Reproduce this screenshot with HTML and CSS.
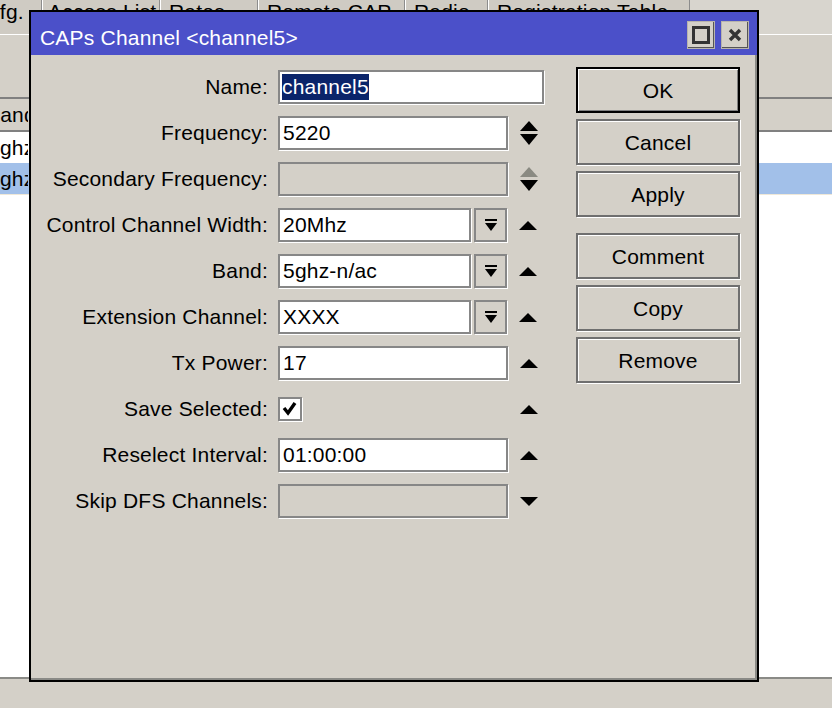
FILE: index.html
```html
<!DOCTYPE html>
<html>
<head>
    <title>CAPs Channel</title>
    <link rel="stylesheet" href="styles.css">
</head>
<body>
    <!-- Background CAPsMAN window -->
    <div class="desktop">
        <div class="tabs">
            <span class="tab tab-first">Security Cfg.</span>
            <span class="tab tab-access">Access List</span>
            <span class="tab tab-rates">Rates</span>
            <span class="tab tab-remote">Remote CAP</span>
            <span class="tab tab-radio">Radio</span>
            <span class="tab tab-reg">Registration Table</span>
        </div>
        <div class="toolbar"></div>
        <div class="list">
            <div class="list-header"><span class="cell">Band</span></div>
            <div class="list-row"><span class="cell">5ghz-n/ac</span></div>
            <div class="list-row selected"><span class="cell">5ghz-n/ac</span></div>
        </div>
        <div class="statusbar"></div>
    </div>

    <!-- CAPs Channel dialog -->
    <div class="dialog">
        <div class="titlebar">
            <span class="title">CAPs Channel &lt;channel5&gt;</span>
            <span class="title-btn">
                <svg width="18" height="18" viewBox="0 0 18 18"><rect x="1.5" y="1.5" width="15" height="15" fill="none" stroke="#333" stroke-width="3"/></svg>
            </span>
            <span class="title-btn">
                <svg width="14" height="14" viewBox="0 0 14 14"><path d="M2 2 L12 12 M12 2 L2 12" stroke="#333" stroke-width="3.4"/></svg>
            </span>
        </div>

        <div class="dialog-body">
            <div class="form">
                <div class="row">
                    <span class="label">Name:</span>
                    <span class="field wide"><span class="sel">channel5</span></span>
                </div>
                <div class="row">
                    <span class="label">Frequency:</span>
                    <span class="field">5220</span>
                    <span class="arrow">
                        <svg width="18" height="24" viewBox="0 0 18 24"><polygon points="0,10 9,0 18,10" fill="#000"/><polygon points="0,13 18,13 9,24" fill="#000"/></svg>
                    </span>
                </div>
                <div class="row">
                    <span class="label">Secondary Frequency:</span>
                    <span class="field disabled"></span>
                    <span class="arrow">
                        <svg width="18" height="24" viewBox="0 0 18 24"><polygon points="0,10 9,0 18,10" fill="#8a8a82"/><polygon points="0,13 18,13 9,24" fill="#000"/></svg>
                    </span>
                </div>
                <div class="row">
                    <span class="label">Control Channel Width:</span>
                    <span class="field short">20Mhz</span>
                    <span class="dd-btn">
                        <svg width="12" height="13" viewBox="0 0 12 13"><rect x="0" y="0" width="12" height="2" fill="#000"/><polygon points="0,4 12,4 6,12" fill="#000"/></svg>
                    </span>
                    <span class="arrow">
                        <svg width="18" height="9" viewBox="0 0 18 9"><polygon points="0,9 9,0 18,9" fill="#000"/></svg>
                    </span>
                </div>
                <div class="row">
                    <span class="label">Band:</span>
                    <span class="field short">5ghz-n/ac</span>
                    <span class="dd-btn">
                        <svg width="12" height="13" viewBox="0 0 12 13"><rect x="0" y="0" width="12" height="2" fill="#000"/><polygon points="0,4 12,4 6,12" fill="#000"/></svg>
                    </span>
                    <span class="arrow">
                        <svg width="18" height="9" viewBox="0 0 18 9"><polygon points="0,9 9,0 18,9" fill="#000"/></svg>
                    </span>
                </div>
                <div class="row">
                    <span class="label">Extension Channel:</span>
                    <span class="field short">XXXX</span>
                    <span class="dd-btn">
                        <svg width="12" height="13" viewBox="0 0 12 13"><rect x="0" y="0" width="12" height="2" fill="#000"/><polygon points="0,4 12,4 6,12" fill="#000"/></svg>
                    </span>
                    <span class="arrow">
                        <svg width="18" height="9" viewBox="0 0 18 9"><polygon points="0,9 9,0 18,9" fill="#000"/></svg>
                    </span>
                </div>
                <div class="row">
                    <span class="label">Tx Power:</span>
                    <span class="field">17</span>
                    <span class="arrow">
                        <svg width="18" height="9" viewBox="0 0 18 9"><polygon points="0,9 9,0 18,9" fill="#000"/></svg>
                    </span>
                </div>
                <div class="row">
                    <span class="label">Save Selected:</span>
                    <span class="checkbox">
                        <svg width="20" height="20" viewBox="0 0 20 20"><polyline points="4,9 8,14 15,4" fill="none" stroke="#000" stroke-width="3.4"/></svg>
                    </span>
                    <span class="spacer"></span>
                    <span class="arrow">
                        <svg width="18" height="9" viewBox="0 0 18 9"><polygon points="0,9 9,0 18,9" fill="#000"/></svg>
                    </span>
                </div>
                <div class="row">
                    <span class="label">Reselect Interval:</span>
                    <span class="field">01:00:00</span>
                    <span class="arrow">
                        <svg width="18" height="9" viewBox="0 0 18 9"><polygon points="0,9 9,0 18,9" fill="#000"/></svg>
                    </span>
                </div>
                <div class="row">
                    <span class="label">Skip DFS Channels:</span>
                    <span class="field disabled"></span>
                    <span class="arrow">
                        <svg width="18" height="9" viewBox="0 0 18 9"><polygon points="0,0 18,0 9,9" fill="#000"/></svg>
                    </span>
                </div>
            </div>

            <div class="buttons">
                <button class="btn default">OK</button>
                <button class="btn">Cancel</button>
                <button class="btn">Apply</button>
                <button class="btn group-start">Comment</button>
                <button class="btn">Copy</button>
                <button class="btn">Remove</button>
            </div>
        </div>
    </div>
</body>
</html>
```

FILE: styles.css
```css
/* Page and base font */
body {
    width: 832px;
    height: 708px;
    margin: 0;
    overflow: hidden;
    position: relative;
    background-color: #d4d0c8;
    font-family: "Liberation Sans", Arial, sans-serif;
    font-size: 21px;
    letter-spacing: 0.2px;
    color: #000;
}

/* Background window */
.desktop {
    display: flex;
    flex-direction: column;
    height: 708px;
}

.tabs {
    display: flex;
    height: 35px;
    flex-shrink: 0;
    background-color: #d8d5ce;
    border-bottom: 1px solid #ffffff;
    box-sizing: border-box;
    overflow: hidden;
}

.tab {
    flex-shrink: 0;
    box-sizing: border-box;
    height: 34px;
    padding: 0 8px;
    line-height: 24px;
    white-space: nowrap;
    overflow: hidden;
    background-color: #cfcbc3;
    border-right: 1px solid #8c8c8c;
    border-left: 1px solid #ffffff;
}

.tab-first    { width: 149px; margin-left: -107px; border-left: none; }
.tab-access   { width: 118px; padding: 0 5px; }
.tab-rates    { width: 98px; }
.tab-remote   { width: 147px; }
.tab-radio    { width: 83px; }
.tab-reg      { width: 202px; }

.toolbar {
    height: 62px;
    flex-shrink: 0;
}

.list {
    flex: 1;
    background-color: #ffffff;
    border-top: 2px solid #808080;
}

.list-header {
    height: 31px;
    line-height: 31px;
    background-color: #d4d0c8;
    border-bottom: 2px solid #808080;
}

.list-row {
    height: 31px;
    line-height: 31px;
}

.list-row.selected {
    background-color: #a2c0e9;
    border-bottom: 1px solid #efe8d8;
}

.cell {
    display: inline-block;
    vertical-align: top;
    white-space: nowrap;
    overflow: hidden;
}

.list-header .cell {
    width: 42px;
    margin-left: -14px;
}

.list-row .cell {
    width: 40px;
    margin-left: -12px;
}

.statusbar {
    height: 29px;
    flex-shrink: 0;
    border-top: 2px solid #8a8a86;
}

/* Dialog window */
.dialog {
    position: absolute;
    left: 29px;
    top: 10px;
    width: 730px;
    height: 672px;
    box-sizing: border-box;
    border: 2px solid #000;
    background-color: #d4d0c8;
    box-shadow: inset -2px -2px 0 #8a8a86;
    display: flex;
    flex-direction: column;
}

.titlebar {
    height: 43px;
    flex-shrink: 0;
    display: flex;
    align-items: flex-start;
    padding: 0 8px 0 9px;
    background-color: #4b50c9;
    color: #ffffff;
}

.title {
    flex: 1;
    margin-top: 14px;
    line-height: 24px;
    white-space: nowrap;
}

.title-btn {
    width: 28px;
    height: 28px;
    margin-top: 9px;
    margin-left: 6px;
    box-sizing: border-box;
    display: flex;
    align-items: center;
    justify-content: center;
    background-color: #d4d0c8;
    border: 1px solid #b8b4ac;
    box-shadow: inset -1px -1px 0 #555;
}

.dialog-body {
    display: flex;
    padding-top: 9px;
}

/* Form rows */
.form {
    width: 545px;
}

.row {
    display: flex;
    align-items: center;
    height: 46px;
}

.label {
    width: 237px;
    margin-right: 10px;
    text-align: right;
    white-space: nowrap;
}

.field {
    width: 230px;
    height: 34px;
    box-sizing: border-box;
    padding: 0 3px;
    line-height: 30px;
    white-space: nowrap;
    background-color: #ffffff;
    border: 2px solid #878787;
    box-shadow: 1px 1px 0 #ffffff;
}

.field.wide {
    width: 266px;
}

.field.short {
    width: 193px;
}

.field.disabled {
    background-color: #d4d0c8;
}

.sel {
    display: inline-block;
    margin-left: -1px;
    line-height: 26px;
    background-color: #0a246a;
    color: #ffffff;
}

.dd-btn {
    width: 33px;
    height: 34px;
    margin-left: 3px;
    box-sizing: border-box;
    display: flex;
    align-items: center;
    justify-content: center;
    background-color: #d4d0c8;
    border: 2px solid #878787;
    box-shadow: 1px 1px 0 #ffffff;
}

.arrow {
    width: 42px;
    display: flex;
    justify-content: center;
    align-items: center;
}

.checkbox {
    width: 24px;
    height: 24px;
    box-sizing: border-box;
    display: flex;
    align-items: center;
    justify-content: center;
    background-color: #ffffff;
    border: 2px solid #878787;
    box-shadow: 1px 1px 0 #ffffff;
}

.spacer {
    width: 206px;
}

/* Button column */
.buttons {
    display: flex;
    flex-direction: column;
    gap: 6px;
    margin-top: 3px;
}

.btn {
    width: 164px;
    height: 46px;
    padding: 0;
    padding-top: 2px;
    box-sizing: border-box;
    font-family: inherit;
    font-size: 21px;
    letter-spacing: 0.2px;
    color: #000;
    background-color: #d4d0c8;
    border: 2px solid #6f6f6f;
    box-shadow: inset 1px 1px 0 #ffffff, 1px 1px 0 #ffffff;
}

.btn.default {
    border-color: #000;
    box-shadow: inset 1px 1px 0 #ffffff, inset -1px -1px 0 #808080;
}

.btn.group-start {
    margin-top: 10px;
}
```
